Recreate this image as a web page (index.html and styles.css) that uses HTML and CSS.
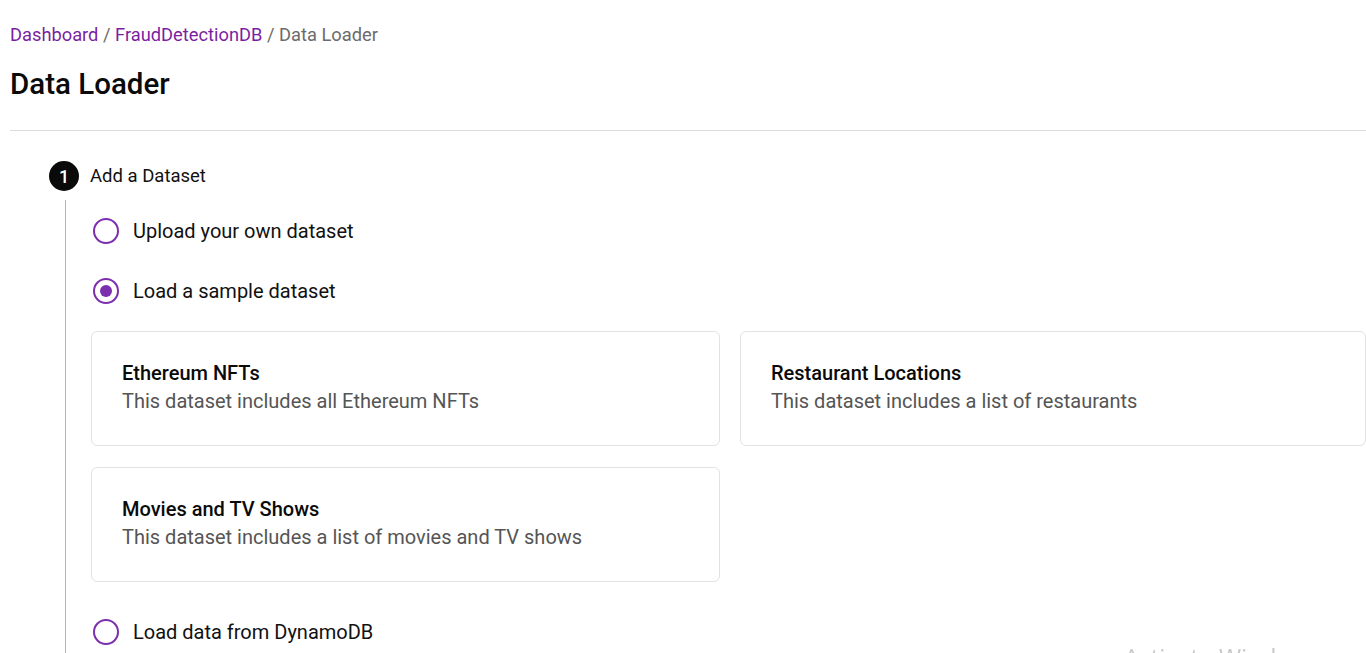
FILE: index.html
```html
<!DOCTYPE html>
<html lang="en">
<head>
<meta charset="utf-8">
<title>Data Loader</title>
<link rel="stylesheet" href="styles.css">
</head>
<body>
<div class="page">
  <nav class="breadcrumb">
    <a href="#">Dashboard</a> <span class="sep">/</span> <a href="#">FraudDetectionDB</a> <span class="sep">/</span> <span class="current">Data Loader</span>
  </nav>
  <h1 class="title">Data Loader</h1>
  <hr class="divider">
  <section class="step">
    <div class="step-head">
      <span class="step-num">1</span>
      <span class="step-label">Add a Dataset</span>
    </div>
    <div class="step-body">
      <label class="radio-row">
        <span class="radio"></span>
        <span class="radio-text">Upload your own dataset</span>
      </label>
      <label class="radio-row before-cards">
        <span class="radio checked"></span>
        <span class="radio-text">Load a sample dataset</span>
      </label>
      <div class="cards">
        <div class="card">
          <div class="card-title">Ethereum NFTs</div>
          <div class="card-desc">This dataset includes all Ethereum NFTs</div>
        </div>
        <div class="card">
          <div class="card-title">Restaurant Locations</div>
          <div class="card-desc">This dataset includes a list of restaurants</div>
        </div>
        <div class="card">
          <div class="card-title">Movies and TV Shows</div>
          <div class="card-desc">This dataset includes a list of movies and TV shows</div>
        </div>
      </div>
      <label class="radio-row last">
        <span class="radio"></span>
        <span class="radio-text">Load data from DynamoDB</span>
      </label>
    </div>
  </section>
</div>
<div class="watermark">Activate Windows</div>
</body>
</html>
```
FILE: styles.css
```css
html, body {
  margin: 0;
  padding: 0;
  background: #ffffff;
  overflow: hidden;
}
body {
  font-family: Roboto, "Liberation Sans", sans-serif;
  color: #111111;
}
.page {
  padding: 24px 0 0 10px;
}
.breadcrumb {
  font-size: 18.3px;
  line-height: 22px;
  color: #6b6b6b;
}
.breadcrumb a {
  color: #7b1fa2;
  text-decoration: none;
}
.title {
  margin: 21px 0 0 0;
  font-size: 29.5px;
  line-height: 34px;
  font-weight: 500;
  color: #0a0a0a;
}
.divider {
  margin: 29px 0 0 0;
  border: 0;
  border-top: 1px solid #dcdcdc;
  height: 0;
}
.step {
  padding-left: 39px;
  margin-top: 30px;
}
.step-head {
  display: flex;
  align-items: center;
  gap: 11px;
  height: 30px;
}
.step-num {
  width: 30px;
  height: 30px;
  border-radius: 50%;
  background: #0a0a0a;
  color: #ffffff;
  display: flex;
  align-items: center;
  justify-content: center;
  font-size: 18px;
  font-weight: 500;
}
.step-label {
  font-size: 18.5px;
  color: #111;
}
.step-body {
  margin-left: 16px;
  margin-top: 9px;
  border-left: 1px solid #b5b5b5;
  padding-left: 26px;
  padding-top: 18px;
  padding-bottom: 20px;
}
.radio-row {
  display: flex;
  align-items: center;
  gap: 14px;
  height: 26px;
  margin-left: 1px;
  margin-bottom: 34px;
  font-size: 20px;
  color: #111;
}
.radio-row.before-cards {
  margin-bottom: 27px;
}
.radio-row.last {
  margin-top: 37px;
  margin-bottom: 0;
}
.radio {
  box-sizing: border-box;
  width: 26px;
  height: 26px;
  border-radius: 50%;
  border: 2.5px solid #7b2fae;
  display: flex;
  align-items: center;
  justify-content: center;
  flex-shrink: 0;
}
.radio.checked::after {
  content: "";
  width: 12px;
  height: 12px;
  border-radius: 50%;
  background: #7b2fae;
}
.cards {
  display: grid;
  grid-template-columns: 629px 626px;
  gap: 21px 20px;
  margin-left: -1px;
}
.card {
  box-sizing: border-box;
  height: 115px;
  border: 1px solid #e2e2e2;
  border-radius: 6px;
  padding: 27px 30px 0 30px;
}
.card-title {
  font-size: 20px;
  line-height: 28px;
  font-weight: 500;
  color: #0a0a0a;
}
.card-desc {
  font-size: 20px;
  line-height: 28px;
  color: #555555;
}
.watermark {
  position: fixed;
  left: 1124px;
  top: 640px;
  font-family: "Open Sans", "DejaVu Sans", sans-serif;
  font-size: 24px;
  color: #c8c8c8;
  white-space: nowrap;
}
```
